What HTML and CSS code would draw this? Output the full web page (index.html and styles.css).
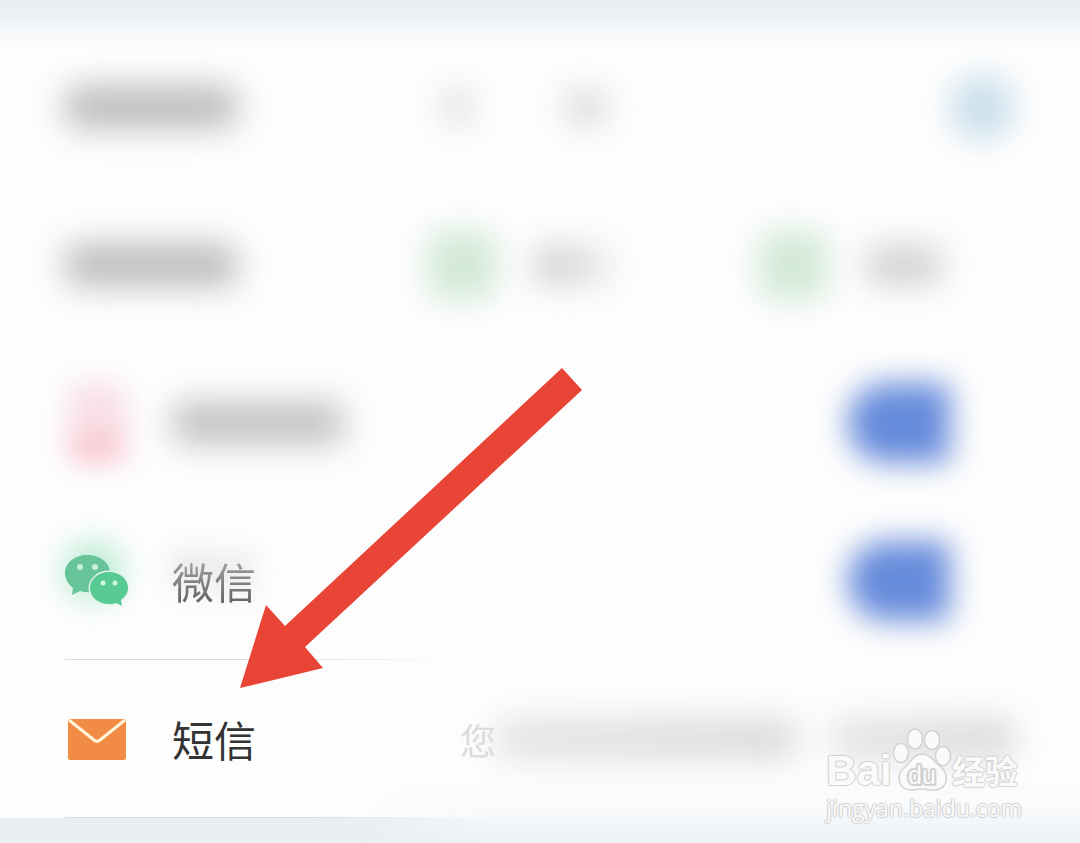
FILE: index.html
```html
<!DOCTYPE html>
<html lang="zh-CN">
<head>
  <meta charset="UTF-8">
  <meta name="viewport" content="width=device-width, initial-scale=1.0">
  <title>短信</title>
  <link rel="stylesheet" href="styles.css">
</head>
<body>
  <main class="screen">
    <ul class="list">
      <li class="row">
        <span class="smudge smudge-label"></span>
        <div class="dots">
          <span class="smudge smudge-dot"></span>
          <span class="smudge smudge-dot wide"></span>
        </div>
        <button class="round-btn" type="button" aria-label="添加"></button>
      </li>
      <li class="row">
        <span class="smudge smudge-label"></span>
        <div class="options">
          <label class="option"><input class="radio" type="radio" name="type"><span class="smudge smudge-option fade"></span></label>
          <label class="option"><input class="radio" type="radio" name="type"><span class="smudge smudge-option"></span></label>
        </div>
      </li>
      <li class="row">
        <span class="icon"><span class="phone"></span></span>
        <label class="smudge smudge-label pale" for="phone-switch"></label>
        <input class="switch" type="checkbox" id="phone-switch" checked>
      </li>
      <li class="row row-line">
        <span class="icon icon-glow">
          <svg class="wechat" viewBox="0 0 64 52">
            <path d="M22 0C10 0 0 8 0 18c0 6 3 11 8 15l-1 7 8-4c3 1 5 1 8 1 12 0 22-8 22-19S34 0 22 0z" fill="#66c498"/>
            <ellipse cx="44" cy="33" rx="20.500" ry="17.500" fill="#e4f6ec"/>
            <path d="M44 17c-11 0-19 7-19 16s8 16 19 16c2 0 5 0 7-1l6 3-1-6c4-3 7-7 7-12 0-9-8-16-19-16z" fill="#58ca94"/>
            <circle cx="15" cy="12" r="3" fill="#c6f0da"/><circle cx="30" cy="12" r="3" fill="#c6f0da"/>
            <circle cx="38" cy="28" r="2.500" fill="#d2f6e3"/><circle cx="50" cy="28" r="2.500" fill="#d2f6e3"/>
          </svg>
        </span>
        <label class="name name-dim" for="wechat-switch">微信</label>
        <input class="switch" type="checkbox" id="wechat-switch" checked>
      </li>
      <li class="row row-line long">
        <span class="icon">
          <svg class="mail" viewBox="0 0 58 41">
            <rect width="58" height="41" rx="2.500" fill="#f28b43"/>
            <path d="M1 1l25 20q3 2.500 6 0L57 1" fill="none" stroke="#fff5dc" stroke-width="3"/>
          </svg>
        </span>
        <span class="name">短信</span>
        <div class="hint">
          <span class="hint-text">您</span>
          <span class="smudge smudge-hint"></span>
          <span class="smudge smudge-hint short"></span>
        </div>
      </li>
    </ul>

    <svg class="arrow" viewBox="0 0 344 322">
      <path d="M322 0l20 22L65 279l18 21L0 320l26-83 19 21z" fill="#e94537"/>
    </svg>

    <div class="watermark">
      <div class="brand">
        <span class="brand-bai">Bai</span>
        <svg class="paw" viewBox="0 0 60 64">
          <g fill="#fafafa" stroke="#d2d2d2" stroke-width="1.500">
            <ellipse cx="9" cy="25" rx="7.500" ry="9.500"/>
            <ellipse cx="23" cy="11" rx="7.500" ry="10"/>
            <ellipse cx="40" cy="12" rx="7.500" ry="9.500"/>
            <ellipse cx="51" cy="28" rx="7.500" ry="9.500"/>
            <path d="M30 26c-8 0-11 8-17 13-9 7-8 22 5 23 5 0 8-1 13-1s8 2 13 1c12-2 13-15 6-22-7-5-11-14-20-14z"/>
          </g>
          <text class="paw-text" x="30" y="56" text-anchor="middle">du</text>
        </svg>
        <span class="brand-cn">经验</span>
      </div>
      <div class="site">jingyan.baidu.com</div>
    </div>
  </main>
</body>
</html>
```
FILE: styles.css
```css
* { margin: 0; padding: 0; box-sizing: border-box; }

body {
  font-family: "Noto Sans CJK SC", "Noto Sans", sans-serif;
  background: #eaeff3;
}

.screen {
  position: relative;
  min-height: 100vh;
  padding: 28px 0 25px;
  overflow: hidden;
  background: #eaeff3;
}

/* soft top edge */
.screen::before {
  content: "";
  position: absolute;
  top: 0;
  left: 0;
  right: 0;
  z-index: 1;
  height: 52px;
  background: linear-gradient(#eaeff3 8px, #eef2f6 20px, #f6f8fa 30px, #fafbfc 40px, #fdfdfd);
}

/* soft bottom edge on the right side */
.screen::after {
  content: "";
  position: absolute;
  left: 360px;
  right: 0;
  bottom: 0;
  height: 64px;
  background: linear-gradient(rgba(253, 253, 253, 0), #f7f9fb 50%, #edf2f6);
  -webkit-mask-image: linear-gradient(to right, transparent, #000 140px);
  mask-image: linear-gradient(to right, transparent, #000 140px);
}

.list {
  list-style: none;
  background: #fdfdfd;
}

.row {
  position: relative;
  display: flex;
  align-items: center;
  height: 158px;
  padding: 0 65px;
}

.row-line {
  background: linear-gradient(to right, #d9dbdc 190px, rgba(217, 219, 220, 0) 390px) 65px 100% / 100% 1px no-repeat;
}

.row-line.long {
  background-image: linear-gradient(to right, #d9dbdc 240px, rgba(217, 219, 220, 0) 440px);
}

.smudge {
  flex: none;
  border-radius: 14px;
  background: #bcbcbc;
  filter: blur(16px);
}

.smudge-label { width: 172px; height: 42px; }
.smudge-label.pale { background: #c2c2c2; }
.smudge-dot { width: 26px; height: 34px; background: #d8d8d8; }
.smudge-dot.wide { width: 40px; }
.smudge-option { width: 76px; height: 38px; background: #d0d0d0; }
.smudge-option.fade { background: linear-gradient(to right, #c8c8c8, #ececec); }

.dots {
  display: flex;
  gap: 96px;
  margin-left: 207px;
}

.round-btn {
  width: 66px;
  height: 66px;
  margin-left: auto;
  border: none;
  border-radius: 50%;
  background: #cce0ed;
  filter: blur(15px);
}

.options {
  flex: 1;
  display: grid;
  grid-template-columns: 9fr 7fr;
  margin-left: 190px;
}

.option {
  display: flex;
  align-items: center;
  gap: 38px;
}

.radio {
  appearance: none;
  flex: none;
  width: 70px;
  height: 70px;
  border-radius: 20px;
  background: #d3e9d8;
  filter: blur(15px);
}

.icon {
  position: relative;
  flex: none;
  display: flex;
  justify-content: center;
  width: 64px;
  margin-right: 43px;
}

.icon svg { position: relative; display: block; }

.phone {
  width: 58px;
  height: 80px;
  border-radius: 16px;
  background: linear-gradient(#f8e0e6 60%, #fac6d1 70%);
  filter: blur(13px);
}

.icon-glow::before {
  content: "";
  position: absolute;
  left: 0;
  top: -12px;
  width: 56px;
  height: 56px;
  border-radius: 50%;
  background: #b0e8cd;
  filter: blur(16px);
}

.wechat { width: 64px; height: 52px; }
.mail { width: 58px; height: 41px; }

.name {
  font-size: 42px;
  line-height: 60px;
  color: #333;
}

.name-dim {
  color: transparent;
  background: linear-gradient(#999 15px, #666 50px);
  -webkit-background-clip: text;
  background-clip: text;
  filter: drop-shadow(0 -12px 14px rgba(0, 0, 0, 0.2));
}

.switch {
  appearance: none;
  width: 102px;
  height: 80px;
  margin-left: auto;
  margin-right: 65px;
  border-radius: 38px 8px 8px 38px;
  background: #668bdb;
  filter: blur(15px);
}

.hint {
  flex: 1;
  display: flex;
  align-items: center;
  margin-left: 204px;
}

.hint-text {
  font-size: 36px;
  line-height: 60px;
  color: #dcdcdc;
}

.smudge-hint {
  flex: 306;
  height: 38px;
  margin-right: 36px;
  background: linear-gradient(to right, #e2e2e2, #d8d8d8);
}

.smudge-hint.short {
  flex: 186;
  margin-right: 0;
}

.arrow {
  position: absolute;
  left: 240px;
  top: 368px;
  width: 344px;
  height: 322px;
}

.watermark {
  position: absolute;
  right: 58px;
  bottom: 20px;
  z-index: 1;
  color: #fafafa;
  text-shadow: 1px 0 1px #d0d0d0, -1px 0 1px #d0d0d0, 0 1px 1px #d0d0d0, 0 -1px 1px #d0d0d0;
}

.brand {
  display: flex;
  align-items: flex-end;
  height: 66px;
}

.brand-bai {
  font: bold 42px/44px "Liberation Sans", sans-serif;
}

.brand-cn {
  font-size: 33px;
  font-weight: 700;
  line-height: 46px;
}

.paw {
  flex: none;
  width: 60px;
  height: 66px;
}

.paw-text {
  font: 25px "Liberation Sans", sans-serif;
  fill: #fafafa;
  stroke: #cfcfcf;
  stroke-width: 2px;
  paint-order: stroke;
}

.site {
  font: 23px/30px "Open Sans", sans-serif;
}
```
